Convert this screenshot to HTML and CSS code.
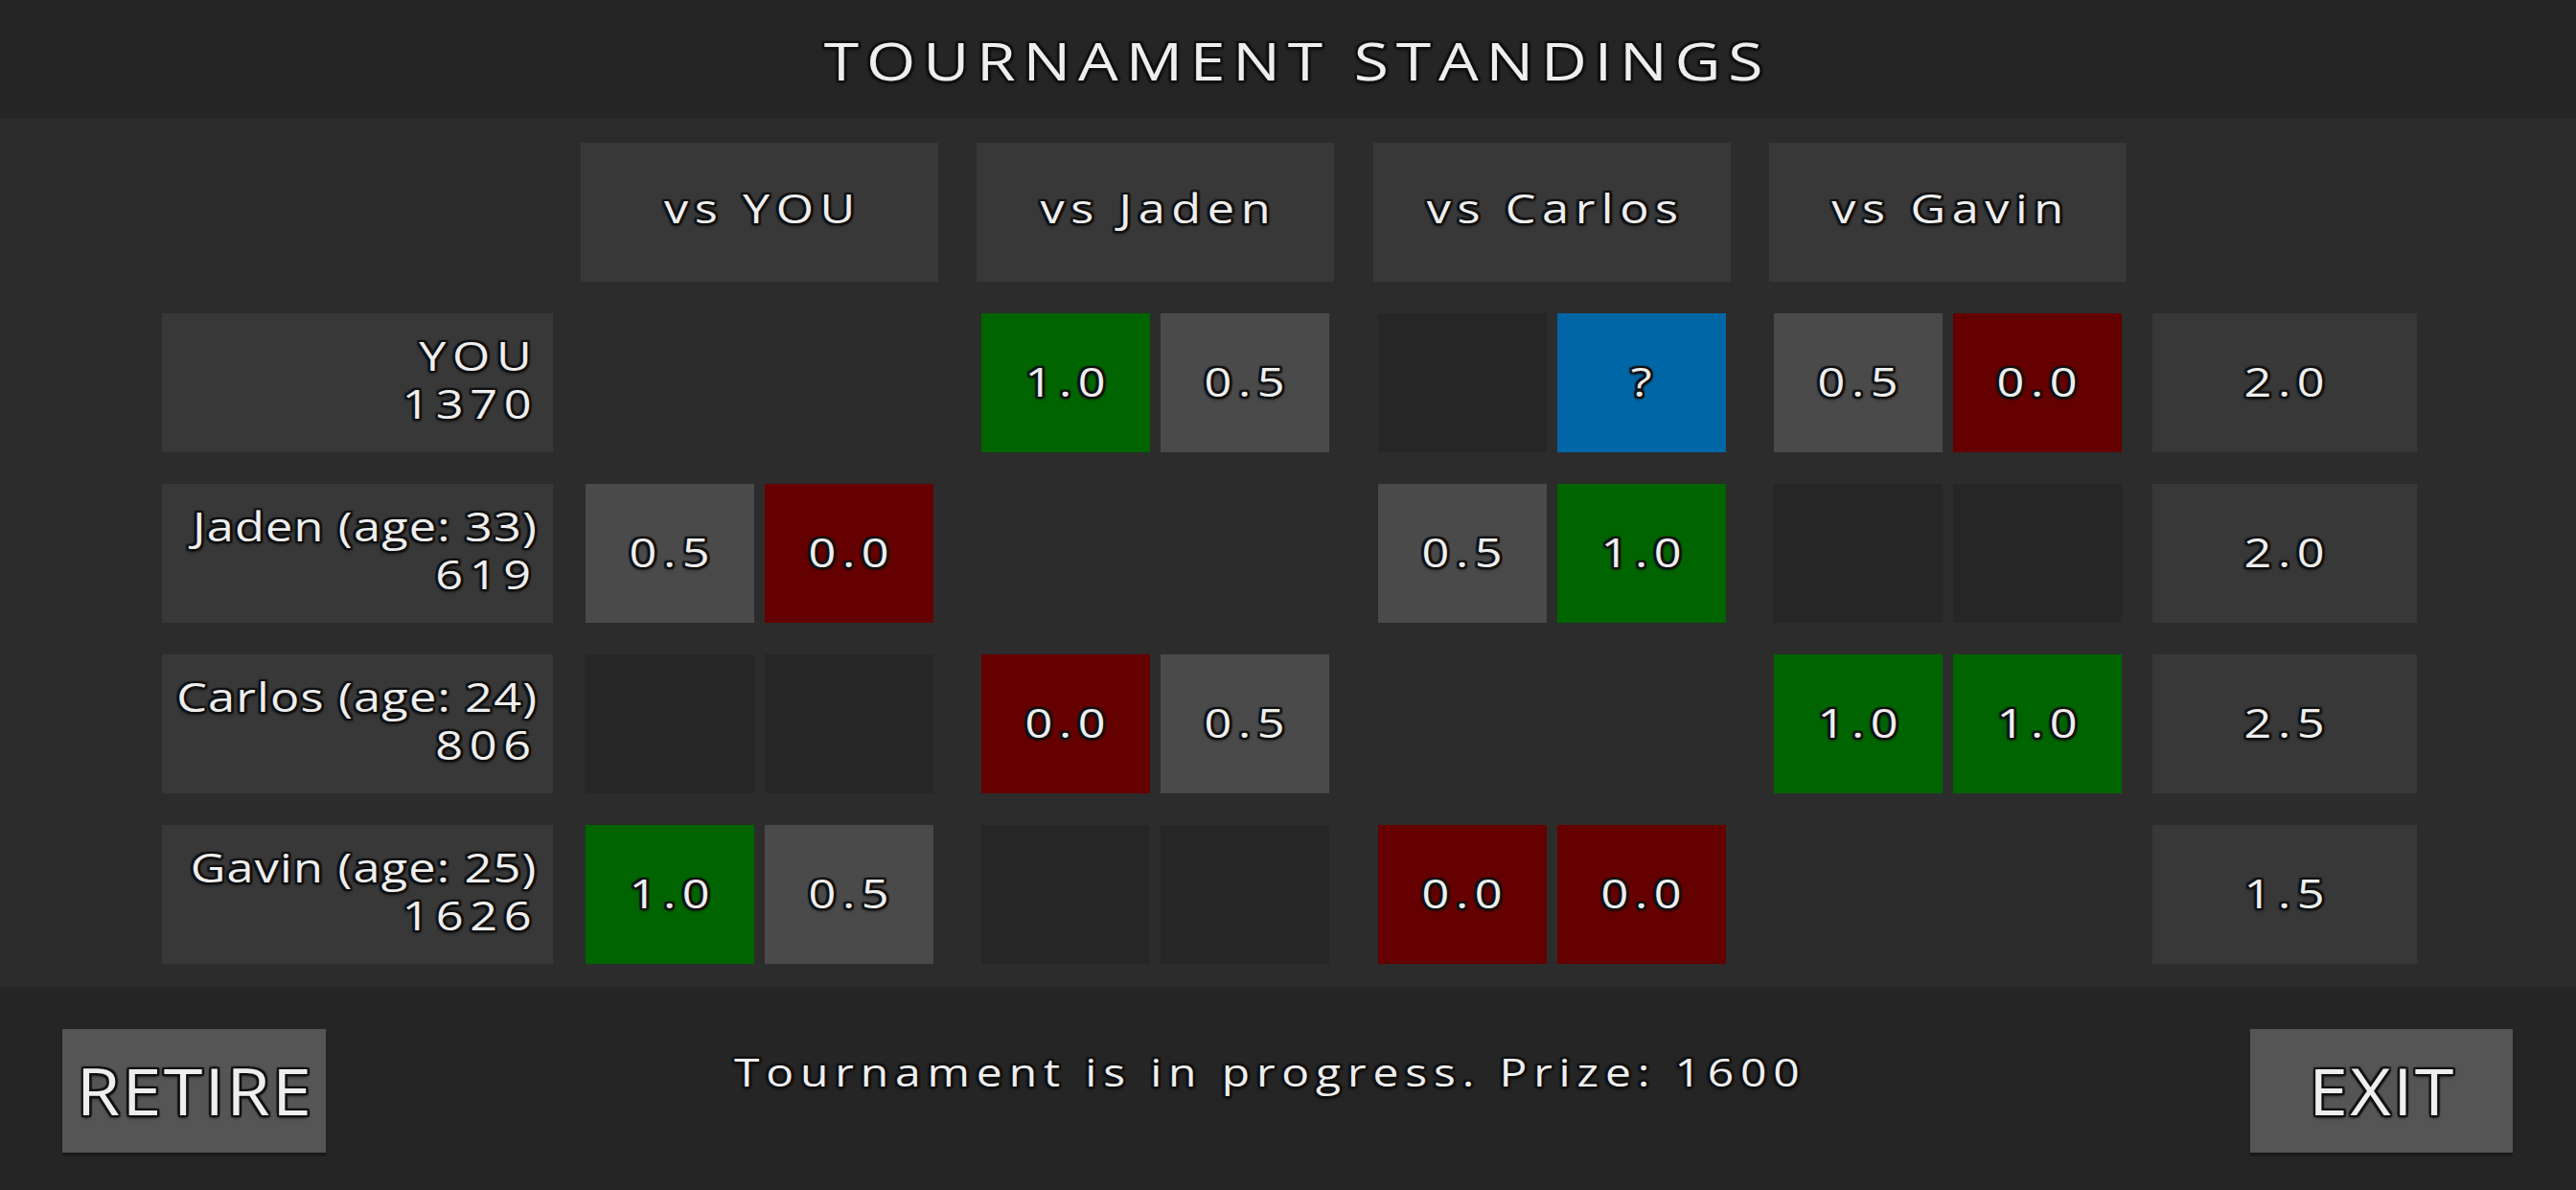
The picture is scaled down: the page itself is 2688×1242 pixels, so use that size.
FILE: index.html
```html
<!DOCTYPE html>
<html lang="en">
<head>
<meta charset="utf-8">
<title>Tournament Standings</title>
<link rel="stylesheet" href="styles.css">
</head>
<body>
<div class="screen">
  <header class="topbar">
    <h1 class="title"><span class="t">TOURNAMENT STANDINGS</span></h1>
  </header>

  <main class="board">
    <div class="standings">
      <!-- header row -->
      <div class="head col-1"><span class="t">vs YOU</span></div>
      <div class="head col-2"><span class="t">vs Jaden</span></div>
      <div class="head col-3"><span class="t">vs Carlos</span></div>
      <div class="head col-4"><span class="t">vs Gavin</span></div>

      <!-- YOU -->
      <div class="name col-name"><div><span class="t">YOU</span></div><div><span class="t">1370</span></div></div>
      <div class="pair col-2"><div class="cell win"><span class="t">1.0</span></div><div class="cell draw"><span class="t">0.5</span></div></div>
      <div class="pair col-3"><div class="cell empty"></div><div class="cell pending"><span class="t">?</span></div></div>
      <div class="pair col-4"><div class="cell draw"><span class="t">0.5</span></div><div class="cell loss"><span class="t">0.0</span></div></div>
      <div class="total col-total"><span class="t">2.0</span></div>

      <!-- Jaden -->
      <div class="name col-name"><div class="long"><span class="t">Jaden (age: 33)</span></div><div><span class="t">619</span></div></div>
      <div class="pair col-1"><div class="cell draw"><span class="t">0.5</span></div><div class="cell loss"><span class="t">0.0</span></div></div>
      <div class="pair col-3"><div class="cell draw"><span class="t">0.5</span></div><div class="cell win"><span class="t">1.0</span></div></div>
      <div class="pair col-4"><div class="cell empty"></div><div class="cell empty"></div></div>
      <div class="total col-total"><span class="t">2.0</span></div>

      <!-- Carlos -->
      <div class="name col-name"><div class="long"><span class="t">Carlos (age: 24)</span></div><div><span class="t">806</span></div></div>
      <div class="pair col-1"><div class="cell empty"></div><div class="cell empty"></div></div>
      <div class="pair col-2"><div class="cell loss"><span class="t">0.0</span></div><div class="cell draw"><span class="t">0.5</span></div></div>
      <div class="pair col-4"><div class="cell win"><span class="t">1.0</span></div><div class="cell win"><span class="t">1.0</span></div></div>
      <div class="total col-total"><span class="t">2.5</span></div>

      <!-- Gavin -->
      <div class="name col-name"><div class="long"><span class="t">Gavin (age: 25)</span></div><div><span class="t">1626</span></div></div>
      <div class="pair col-1"><div class="cell win"><span class="t">1.0</span></div><div class="cell draw"><span class="t">0.5</span></div></div>
      <div class="pair col-2"><div class="cell empty"></div><div class="cell empty"></div></div>
      <div class="pair col-3"><div class="cell loss"><span class="t">0.0</span></div><div class="cell loss"><span class="t">0.0</span></div></div>
      <div class="total col-total"><span class="t">1.5</span></div>
    </div>
  </main>

  <footer class="bottombar">
    <button class="btn"><span class="t">RETIRE</span></button>
    <p class="status"><span class="t">Tournament is in progress. Prize: 1600</span></p>
    <button class="btn btn-exit"><span class="t">EXIT</span></button>
  </footer>
</div>
</body>
</html>
```

FILE: styles.css
```css
html, body {
  margin: 0;
  padding: 0;
  background: #252525;
}

body {
  width: 2688px;
  height: 1242px;
  overflow: hidden;
  font-family: "Open Sans", "Noto Sans", sans-serif;
  color: #eeeeee;
}

.screen {
  display: flex;
  flex-direction: column;
  height: 1242px;
}

/* outlined, slightly wide game-style text */
.t {
  display: inline-block;
  white-space: nowrap;
  transform: scaleX(1.2);
  transform-origin: center center;
  text-shadow:
    -2px -2px 1px #111, 2px -2px 1px #111,
    -2px 2px 1px #111, 2px 2px 1px #111,
    0 -2px 1px #111, 0 2px 1px #111,
    -2px 0 1px #111, 2px 0 1px #111,
    0 3px 3px rgba(0, 0, 0, 0.6);
}

/* ---------- top bar ---------- */
.topbar {
  flex: none;
  height: 124px;
  background: #252525;
  display: flex;
  align-items: center;
  justify-content: center;
}

.title {
  margin: 0 0 0 12px;
  font-size: 55px;
  font-weight: 400;
  line-height: normal;
}

.title .t {
  letter-spacing: 6.5px;
  padding-left: 6.5px;
}

/* ---------- board ---------- */
.board {
  flex: none;
  height: 906px;
  box-sizing: border-box;
  padding: 25px 0 0 169px;
  background: #2c2c2c;
}

.standings {
  display: grid;
  grid-template-columns: 408px 29px 373px 40px 373px 41px 373px 40px 373px 27px 276px;
  grid-template-rows: repeat(5, 145px);
  row-gap: 33px;
  font-size: 42px;
}

.col-name  { grid-column: 1; }
.col-1     { grid-column: 3; }
.col-2     { grid-column: 5; }
.col-3     { grid-column: 7; }
.col-4     { grid-column: 9; }
.col-total { grid-column: 11; }

.head {
  background: #383838;
  text-align: center;
  line-height: 135px;
}

.head .t,
.cell .t,
.total .t {
  letter-spacing: 5.5px;
  padding-left: 5.5px;
}

.name {
  background: #383838;
  box-sizing: border-box;
  padding: 19px 16px 0 0;
  text-align: right;
  line-height: 50px;
}

.name .t {
  transform-origin: right center;
  letter-spacing: 5.5px;
}

.name .long .t {
  letter-spacing: 1px;
}

.pair {
  display: flex;
  gap: 11px;
  padding: 0 5px;
}

.cell {
  flex: 1;
  text-align: center;
  line-height: 141px;
}

.win     { background: #006400; }
.loss    { background: #650000; }
.draw    { background: #4a4a4a; }
.empty   { background: #262626; }
.pending { background: #0066a6; }

.total {
  background: #383838;
  text-align: center;
  line-height: 141px;
}

/* ---------- bottom bar ---------- */
.bottombar {
  flex: 1;
  display: flex;
  align-items: flex-start;
  box-sizing: border-box;
  padding: 44px 66px 0 65px;
  background: #252525;
}

.btn {
  flex: none;
  width: 275px;
  height: 129px;
  padding: 0;
  border: 0;
  background: #555555;
  color: #eeeeee;
  font-family: inherit;
  font-size: 67px;
  font-weight: 400;
  line-height: 129px;
  box-shadow: 0 3px 2px rgba(0, 0, 0, 0.35);
}

.btn .t {
  transform: scaleX(1.1);
  letter-spacing: 2px;
  padding-left: 2px;
}

.btn-exit {
  width: 274px;
}

.status {
  flex: 1;
  margin: 0;
  padding: 17px 44px 0 0;
  text-align: center;
  font-size: 40px;
  line-height: normal;
}

.status .t {
  letter-spacing: 5.7px;
  padding-left: 5.7px;
}
```
